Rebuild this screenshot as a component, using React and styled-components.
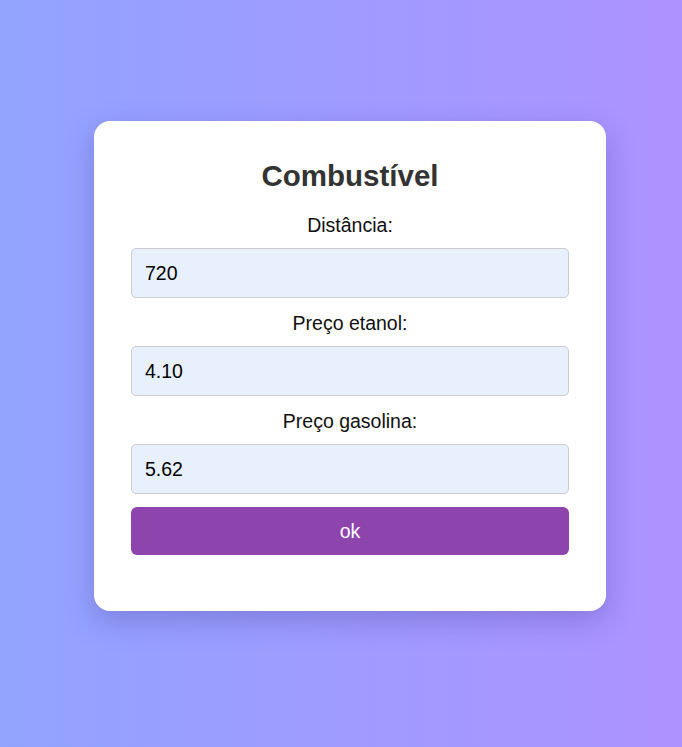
import styled, { createGlobalStyle } from 'styled-components';

const GlobalStyle = createGlobalStyle`
  html, body {
    margin: 0;
    padding: 0;
  }
  body {
    font-family: "Liberation Sans", Arial, sans-serif;
  }
`;

function App() {
  const fields = [
    { label: 'Distância:', value: '720' },
    { label: 'Preço etanol:', value: '4.10' },
    { label: 'Preço gasolina:', value: '5.62' },
  ];

  return (
    <>
      <GlobalStyle />
      <Page>
        <Card>
          <Title>Combustível</Title>
          <Form onSubmit={(e) => e.preventDefault()}>
            {fields.map((field) => (
              <Field key={field.label}>
                <Label>{field.label}</Label>
                <Input type="text" defaultValue={field.value} />
              </Field>
            ))}
            <Button type="submit">ok</Button>
          </Form>
        </Card>
      </Page>
    </>
  );
}

export default App;

const Page = styled.div`
  width: 100%;
  height: 747px;
  box-sizing: border-box;
  padding-left: 18px;
  display: flex;
  justify-content: center;
  align-items: center;
  background: linear-gradient(to right, #92a4ff, #ad93ff);
`;

const Card = styled.div`
  width: 512px;
  box-sizing: border-box;
  padding: 39px 37px 56px;
  margin-top: -15px;
  background: #fff;
  border-radius: 16px;
  box-shadow: 0 10px 30px rgba(40, 30, 120, 0.25);
  text-align: center;
`;

const Title = styled.h1`
  margin: 0 0 23px;
  font-size: 29.5px;
  line-height: 32px;
  font-weight: 700;
  color: #333;
`;

const Form = styled.form`
  display: flex;
  flex-direction: column;
`;

const Field = styled.div`
  display: flex;
  flex-direction: column;
  align-items: stretch;
`;

const Label = styled.label`
  font-size: 19.5px;
  line-height: 21px;
  color: #111;
  margin-bottom: 12px;
`;

const Input = styled.input`
  height: 50px;
  box-sizing: border-box;
  padding: 0 13px;
  margin-bottom: 15px;
  font-family: "Liberation Sans", Arial, sans-serif;
  font-size: 19.5px;
  color: #000;
  background: #e8f0fe;
  border: 1px solid #ccc;
  border-radius: 5px;
  outline: none;
`;

const Button = styled.button`
  height: 48px;
  margin-top: -2px;
  font-family: "Liberation Sans", Arial, sans-serif;
  font-size: 19.5px;
  color: #fff;
  background: #8e44ad;
  border: none;
  border-radius: 6px;
  cursor: pointer;
`;
